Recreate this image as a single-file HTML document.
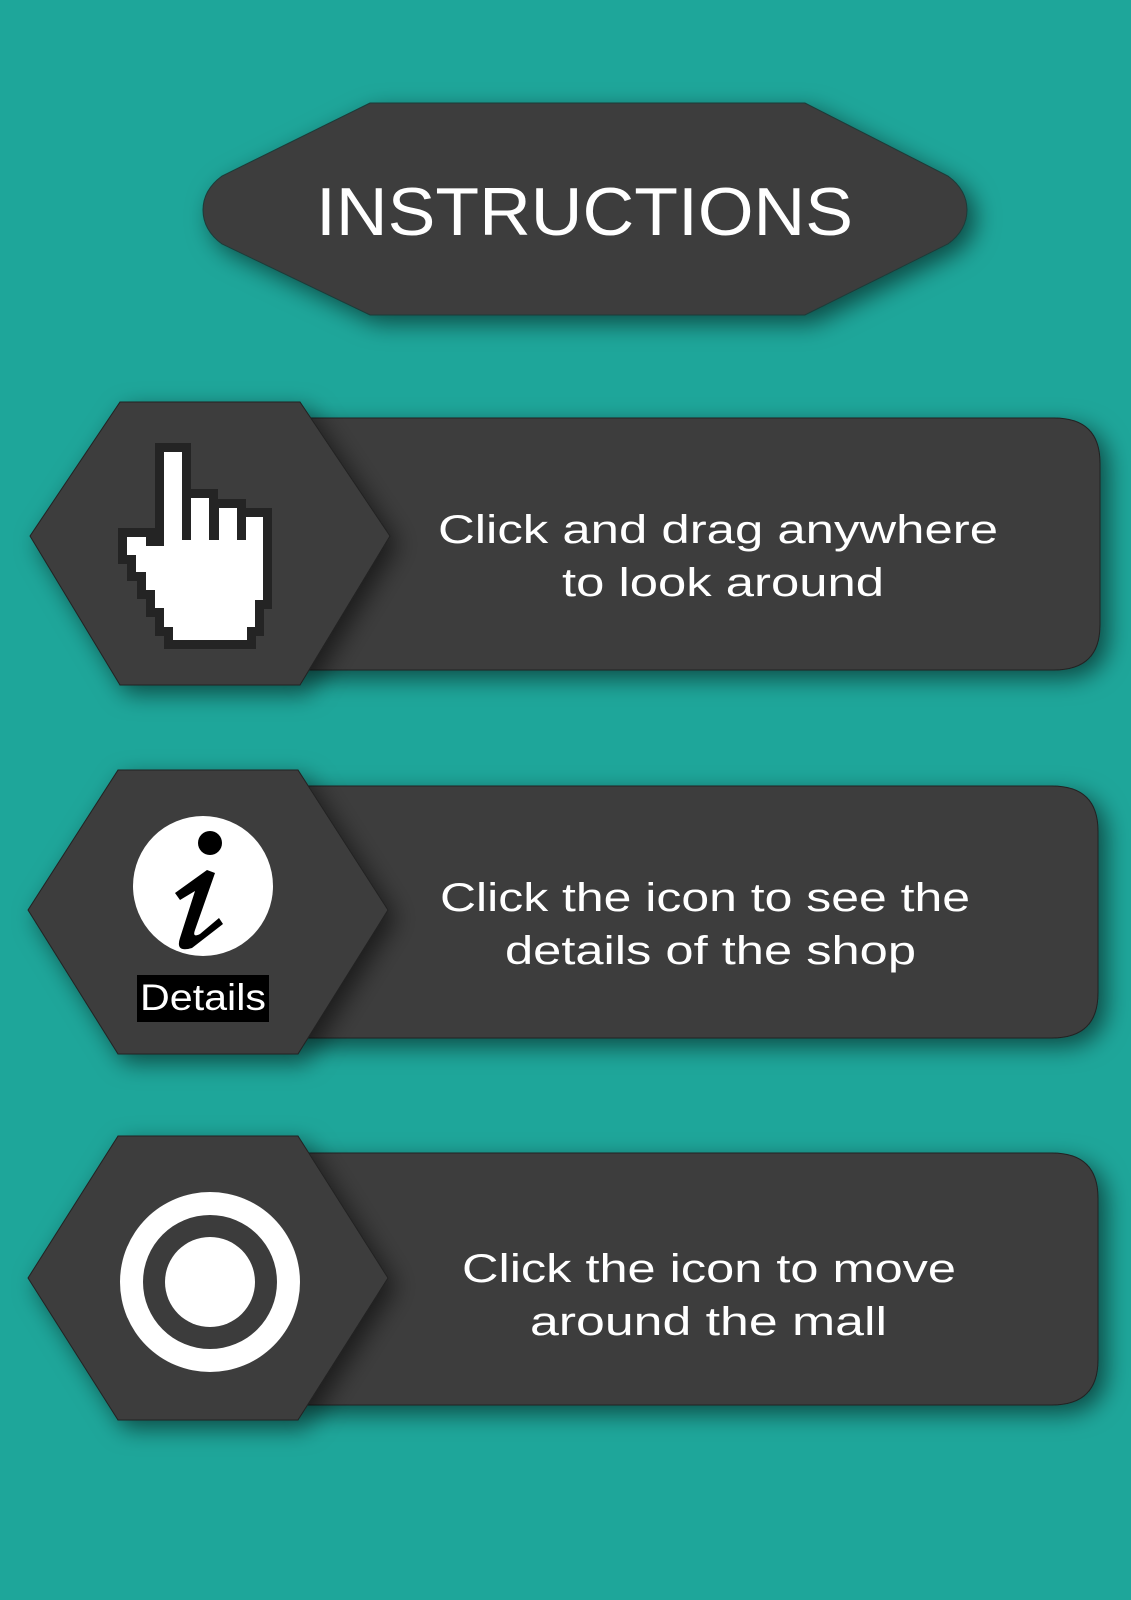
<!DOCTYPE html>
<html><head><style>
html,body{margin:0;padding:0;}
body{width:1131px;height:1600px;background:#1ea69a;overflow:hidden;}
svg{display:block;}
text{font-family:"Liberation Sans",sans-serif;}
</style></head><body>
<svg width="1131" height="1600" viewBox="0 0 1131 1600" xmlns="http://www.w3.org/2000/svg">
<defs>
<filter id="sh" x="-20%" y="-30%" width="140%" height="160%">
<feDropShadow dx="8" dy="8" stdDeviation="12" flood-color="#000" flood-opacity="0.55"/>
</filter>
</defs>
<rect width="1131" height="1600" fill="#1ea69a"/>

<path d="M370,103 L805,103 L948,176 Q967,190 967,210 Q967,230 948,244 L805,315 L370,315 L222,244 Q203,230 203,210 Q203,190 222,176 Z" fill="#3c3c3c" stroke="#1b3b38" stroke-width="1" filter="url(#sh)"/>
<text x="316" y="235" font-size="68" fill="#fff" textLength="537" lengthAdjust="spacingAndGlyphs">INSTRUCTIONS</text>

<path d="M300,418 L1054,418 Q1100,418 1100,463 L1100,625 Q1100,670 1054,670 L300,670 Z" fill="#3c3c3c" stroke="#222" stroke-width="1" filter="url(#sh)"/>
<path d="M120,402 L300,402 L390,536 L300,685 L120,685 L30,536 Z" fill="#3c3c3c" stroke="#222" stroke-width="1" filter="url(#sh)"/>
<polygon points="164,452 182,452 182,498 209,498 209,508 237,508 237,517 263,517 263,600 255,600 255,627 247,627 247,640 173,640 173,627 164,627 164,608 155,608 155,590 146,590 146,572 136,572 136,555 127,555 127,537 146,537 146,546 164,546" fill="#fff" stroke="#242424" stroke-width="18" stroke-linejoin="miter" paint-order="stroke"/>
<rect x="182" y="498" width="9" height="42" fill="#242424"/>
<rect x="209" y="508" width="10" height="32" fill="#242424"/>
<rect x="237" y="517" width="9" height="23" fill="#242424"/>
<text x="438" y="543" font-size="40" fill="#fff" textLength="560" lengthAdjust="spacingAndGlyphs">Click and drag anywhere</text>
<text x="562" y="596" font-size="40" fill="#fff" textLength="322" lengthAdjust="spacingAndGlyphs">to look around</text>

<path d="M300,786 L1052,786 Q1098,786 1098,831 L1098,993 Q1098,1038 1052,1038 L300,1038 Z" fill="#3c3c3c" stroke="#222" stroke-width="1" filter="url(#sh)"/>
<path d="M118,770 L298,770 L388,910 L298,1054 L118,1054 L28,910 Z" fill="#3c3c3c" stroke="#222" stroke-width="1" filter="url(#sh)"/>
<circle cx="203" cy="886" r="70" fill="#fff"/>
<circle cx="210" cy="843" r="12" fill="#000"/>
<path d="M175,893 L207,870 L215,873 L195,930 Q192,938 200,934 L219,918 L223,924 L192,948 Q175,953 180,938 L195,891 L180,900 Z" fill="#000"/>
<rect x="137" y="975" width="132" height="47" fill="#000"/>
<text x="140" y="1010" font-size="37" fill="#fff" textLength="126" lengthAdjust="spacingAndGlyphs">Details</text>
<text x="440" y="911" font-size="40" fill="#fff" textLength="530" lengthAdjust="spacingAndGlyphs">Click the icon to see the</text>
<text x="505" y="964" font-size="40" fill="#fff" textLength="411" lengthAdjust="spacingAndGlyphs">details of the shop</text>

<path d="M300,1153 L1052,1153 Q1098,1153 1098,1198 L1098,1360 Q1098,1405 1052,1405 L300,1405 Z" fill="#3c3c3c" stroke="#222" stroke-width="1" filter="url(#sh)"/>
<path d="M118,1136 L298,1136 L388,1278 L298,1420 L118,1420 L28,1278 Z" fill="#3c3c3c" stroke="#222" stroke-width="1" filter="url(#sh)"/>
<circle cx="210" cy="1282" r="90" fill="#fff"/>
<circle cx="210" cy="1282" r="67" fill="#3c3c3c"/>
<circle cx="210" cy="1282" r="45" fill="#fff"/>
<text x="462" y="1282" font-size="40" fill="#fff" textLength="494" lengthAdjust="spacingAndGlyphs">Click the icon to move</text>
<text x="530" y="1335" font-size="40" fill="#fff" textLength="357" lengthAdjust="spacingAndGlyphs">around the mall</text>
</svg>
</body></html>
